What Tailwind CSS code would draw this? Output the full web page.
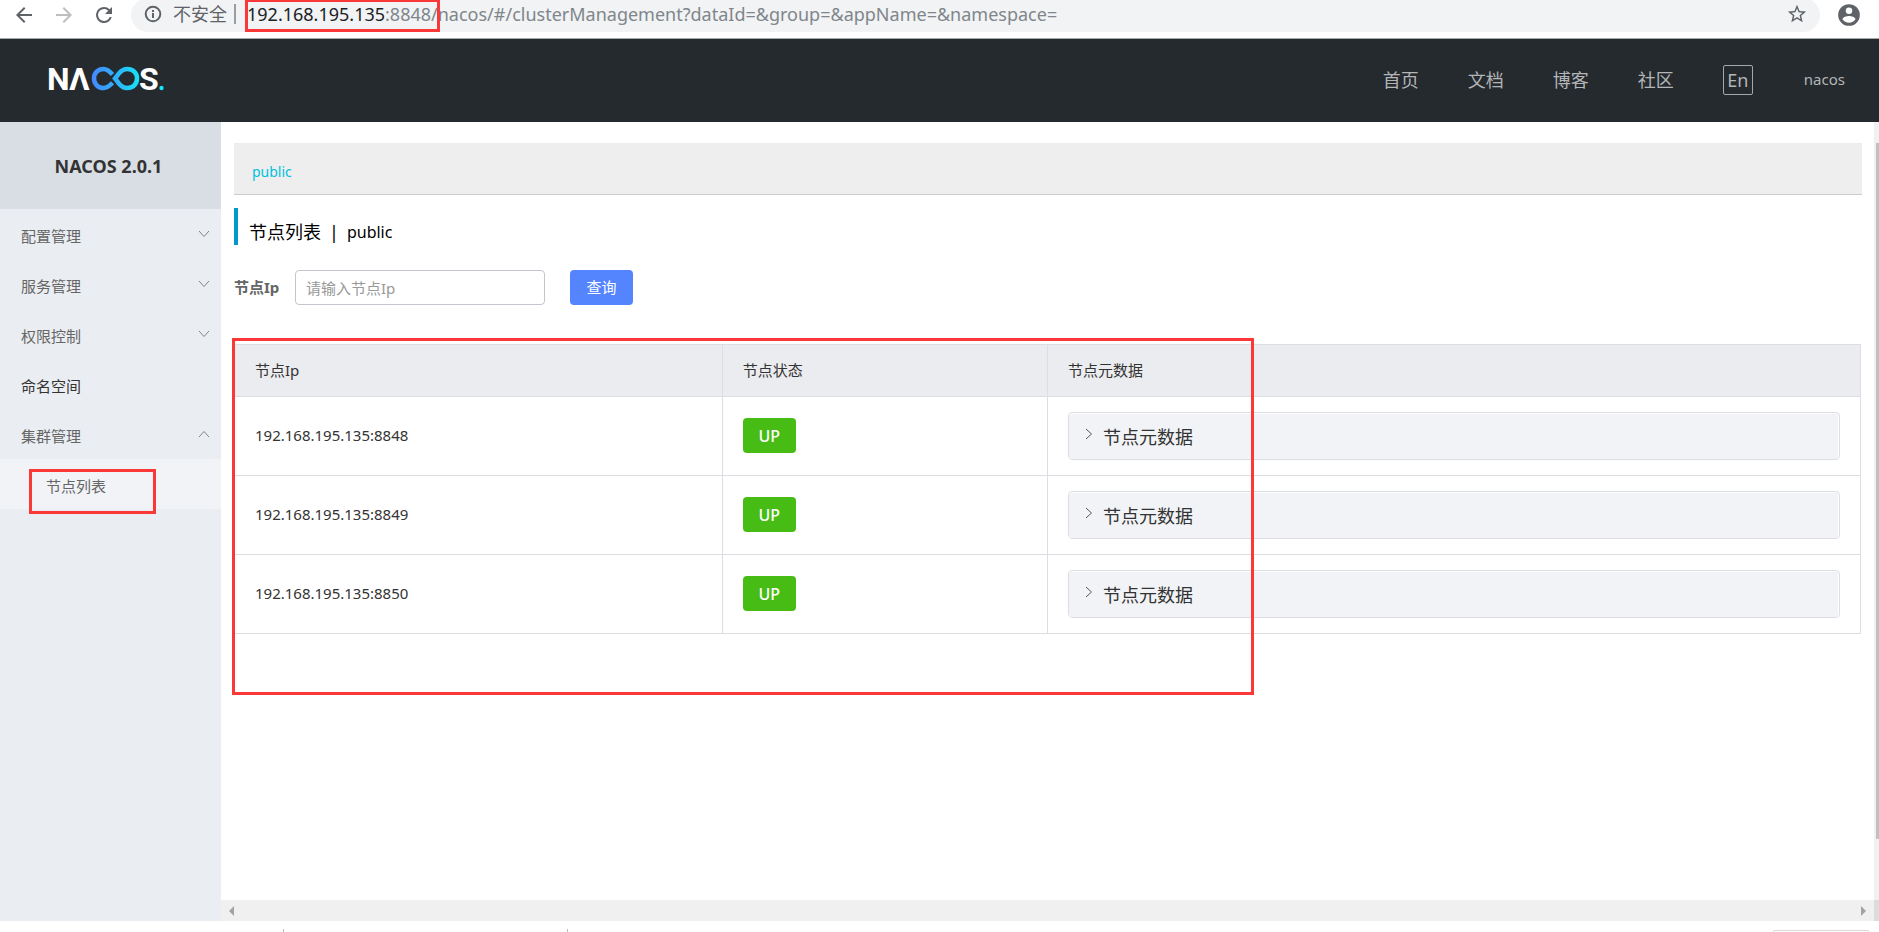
<!DOCTYPE html>
<html lang="zh-CN">
<head>
<meta charset="utf-8">
<title>Nacos</title>
<script src="https://cdn.jsdelivr.net/npm/@tailwindcss/browser@4"></script>
</head>
<body class="flex h-screen min-h-[700px] flex-col overflow-hidden bg-white font-['Noto_Sans','Noto_Sans_CJK_SC',sans-serif] text-[15px] text-[#333]">

<!-- Browser toolbar -->
<div class="flex h-[39px] shrink-0 items-start border-b border-[#a5abab] bg-white pl-3 pr-[17px] text-[#5f6368]">
  <div class="flex h-[30px] items-center gap-4">
    <button aria-label="后退" class="size-6"><svg viewBox="0 0 24 24" class="size-6" fill="#5f6368"><path d="M20 11H7.83l5.59-5.59L12 4l-8 8 8 8 1.41-1.41L7.83 13H20v-2z"/></svg></button>
    <button aria-label="前进" class="size-6"><svg viewBox="0 0 24 24" class="size-6" fill="#bcbec0"><path d="M12 4l-1.41 1.41L16.17 11H4v2h12.17l-5.58 5.59L12 20l8-8z"/></svg></button>
    <button aria-label="重新加载" class="size-6"><svg viewBox="0 0 24 24" class="size-6" fill="#5f6368"><path d="M17.65 6.35A7.96 7.96 0 0 0 12 4a8 8 0 1 0 7.73 10h-2.08A6 6 0 1 1 12 6c1.66 0 3.14.69 4.22 1.78L13 11h7V4l-2.35 2.35z"/></svg></button>
  </div>
  <div class="-mt-0.5 ml-[15px] flex h-[34px] flex-1 items-center rounded-full bg-[#f1f3f4] pb-0.5 pl-3 pr-3">
    <svg viewBox="0 0 20 20" class="size-5 shrink-0" fill="none" stroke="#5f6368" stroke-width="2"><circle cx="10" cy="10" r="7.3"/><path d="M10 9v5M10 6v2"/></svg>
    <span class="ml-2.5 text-lg leading-6">不安全</span>
    <span class="ml-[7px] h-5 w-0.5 bg-[#9a9da1]"></span>
    <div class="relative ml-[11px] text-[18px] leading-6 text-[#80868b]"><span class="text-[#202124]">192.168.195.135</span>:8848/nacos/#/clusterManagement?dataId=&amp;group=&amp;appName=&amp;namespace=
      <span class="absolute -left-[2px] -top-[3px] h-[33px] w-[195px] border-3 border-[#fb3838]"></span>
    </div>
    <button aria-label="收藏" class="ml-auto size-[22px]"><svg viewBox="0 0 24 24" class="size-[22px]" fill="#5f6368"><path d="M22 9.24l-7.19-.62L12 2 9.19 8.63 2 9.24l5.46 4.73L5.82 21 12 17.27 18.18 21l-1.63-7.03L22 9.24zM12 15.4l-3.76 2.27 1-4.28-3.32-2.88 4.38-.38L12 6.1l1.71 4.04 4.38.38-3.32 2.88 1 4.28L12 15.4z"/></svg></button>
  </div>
  <button aria-label="用户" class="ml-4 mt-[2px] size-[26px]"><svg viewBox="0 0 24 24" class="size-[26px]" fill="#5f6368"><path d="M12 2a10 10 0 1 0 0 20 10 10 0 0 0 0-20zm0 3a3 3 0 1 1 0 6 3 3 0 0 1 0-6zm0 14.2a7.2 7.2 0 0 1-6-3.22c.03-1.99 4-3.08 6-3.08s5.970 1.090 6 3.080a7.200 7.200 0 0 1-6 3.220z"/></svg></button>
</div>

<!-- Site header -->
<header class="flex h-[83px] shrink-0 items-center justify-between bg-[#252a2f] pl-12 pr-[34px]">
  <a href="#" aria-label="NACOS" class="mb-[3px] block">
    <svg width="120" height="48" viewBox="0 -8 120 48">
      <defs>
        <linearGradient id="loop" gradientUnits="userSpaceOnUse" x1="44" y1="0" x2="91" y2="0"><stop offset="0" stop-color="#4589ff"/><stop offset=".5" stop-color="#2fb0fa"/><stop offset="1" stop-color="#17e3f6"/></linearGradient>
      </defs>
      <g fill="#fff" font-family="Roboto, sans-serif" font-weight="700" font-size="32">
        <text x="-1" y="27">N</text><text x="21" y="27">Λ</text><text x="91" y="27">S</text>
      </g>
      <g fill="none" stroke="url(#loop)" stroke-width="4.500">
        <path d="M64.500 11.500C61 7.500 58.500 6 55.500 6C50 6 46 10 46 15.500S50 25 55.500 25C58.500 25 61 23.500 64.500 19.800"/>
        <path d="M67 15.500L71.500 9.800C74 7 76.500 6 79 6C85 6 89 10 89 15.500S85 25 79 25C76.500 25 74 24 71.500 21.200Z"/>
      </g>
      <circle cx="113.500" cy="25" r="2.200" fill="#17e3f6"/>
    </svg>
  </a>
  <nav class="flex items-center gap-[49px] pb-px text-lg text-[#b3b5b7]">
    <a href="#">首页</a>
    <a href="#">文档</a>
    <a href="#">博客</a>
    <a href="#">社区</a>
    <button class="flex size-[30px] items-center justify-center rounded-xs border border-[#a5a7a9]">En</button>
    <a href="#" class="pl-0.5 text-[15px]">nacos</a>
  </nav>
</header>

<div class="flex min-h-0 flex-1">
  <!-- Side menu -->
  <aside class="w-[221px] shrink-0 bg-[#eaedf1] text-[#666]">
    <h1 class="flex h-[87px] items-center justify-center bg-[#d9dee4] pr-1 text-lg font-bold text-[#333]">NACOS 2.0.1</h1>
    <ul>
      <li><button class="flex h-[50px] w-full items-center justify-between pl-[21px] pr-3 pt-1">配置管理<svg viewBox="0 0 10 6" class="mb-1 h-1.5 w-2.5 overflow-visible" fill="none" stroke="#808489"><path d="M0 0l5 5.500L10 0"/></svg></button></li>
      <li><button class="flex h-[50px] w-full items-center justify-between pl-[21px] pr-3 pt-1">服务管理<svg viewBox="0 0 10 6" class="mb-1 h-1.5 w-2.5 overflow-visible" fill="none" stroke="#808489"><path d="M0 0l5 5.500L10 0"/></svg></button></li>
      <li><button class="flex h-[50px] w-full items-center justify-between pl-[21px] pr-3 pt-1">权限控制<svg viewBox="0 0 10 6" class="mb-1 h-1.5 w-2.5 overflow-visible" fill="none" stroke="#808489"><path d="M0 0l5 5.500L10 0"/></svg></button></li>
      <li><a href="#" class="flex h-[50px] items-center pl-[21px] pt-1 text-[#333]">命名空间</a></li>
      <li>
        <button class="flex h-[50px] w-full items-center justify-between pl-[21px] pr-3 pt-1">集群管理<svg viewBox="0 0 10 6" class="mb-1 h-1.5 w-2.5 overflow-visible" fill="none" stroke="#808489"><path d="M0 6l5-5.500L10 6"/></svg></button>
        <a href="#" class="relative flex h-[50px] items-center bg-[#f1f3f7] pl-[46px] pt-1">节点列表
          <span class="absolute left-[29px] top-2.5 h-[45px] w-[127px] border-3 border-[#fb3838]"></span>
        </a>
      </li>
    </ul>
  </aside>

  <div class="flex min-w-0 flex-1 flex-col">
    <div class="flex min-h-0 flex-1">
      <main class="min-w-0 flex-1 pl-[13px] pr-3 pt-[21px]">
        <div class="flex h-[52px] items-center border-b border-[#ccc] bg-[#eee] pl-[18px] pt-1.5"><a href="#" class="text-sm text-[#00c1de]">public</a></div>
        <h2 class="mt-[13px] flex h-[37px] items-center gap-2 border-l-4 border-[#09c] pl-[11px] pt-2.5 text-lg text-black"><span>节点列表</span><span>|</span><span class="text-base">public</span></h2>

        <form class="mt-[25px] flex h-[35px] items-center" onsubmit="return false">
          <label for="ip" class="w-[61px] font-bold text-[#666]">节点Ip</label>
          <input id="ip" type="text" placeholder="请输入节点Ip" class="h-full w-[250px] rounded border border-[#c4c6cf] px-2.5 placeholder:text-[#999]">
          <button class="ml-[25px] h-full w-[63px] rounded bg-[#5584ff] text-white">查询</button>
        </form>

        <div class="relative mt-[39px] pr-px">
          <table class="w-full table-fixed border-collapse border border-[#dcdee3]">
            <thead>
              <tr class="h-[52px] bg-[#ebecf0] text-left">
                <th class="w-[30%] border border-[#dcdee3] px-5 font-normal">节点Ip</th>
                <th class="w-[20%] border border-[#dcdee3] px-5 font-normal">节点状态</th>
                <th class="w-[50%] border border-[#dcdee3] px-5 font-normal">节点元数据</th>
              </tr>
            </thead>
            <tbody>
              <tr class="h-[79px]">
                <td class="border border-[#dcdee3] px-5 pb-0.5">192.168.195.135:8848</td>
                <td class="border border-[#dcdee3] px-5 pb-0.5"><span class="flex h-[35px] w-[53px] items-center justify-center rounded bg-[#46bc15] pt-0.5 text-base font-medium text-white">UP</span></td>
                <td class="border border-[#dcdee3] px-5"><button class="flex h-12 w-full rounded border border-[#dcdee3] bg-white pr-px pt-px text-lg"><span class="flex flex-1 items-center bg-[#f2f3f7] pl-[17px]"><svg viewBox="0 0 6 10" class="mb-1.5 mr-[11px] h-2.5 w-1.5 overflow-visible" fill="none" stroke="#555"><path d="M0 0l5.500 5L0 10"/></svg>节点元数据</span></button></td>
              </tr>
              <tr class="h-[79px]">
                <td class="border border-[#dcdee3] px-5 pb-0.5">192.168.195.135:8849</td>
                <td class="border border-[#dcdee3] px-5 pb-0.5"><span class="flex h-[35px] w-[53px] items-center justify-center rounded bg-[#46bc15] pt-0.5 text-base font-medium text-white">UP</span></td>
                <td class="border border-[#dcdee3] px-5"><button class="flex h-12 w-full rounded border border-[#dcdee3] bg-white pr-px pt-px text-lg"><span class="flex flex-1 items-center bg-[#f2f3f7] pl-[17px]"><svg viewBox="0 0 6 10" class="mb-1.5 mr-[11px] h-2.5 w-1.5 overflow-visible" fill="none" stroke="#555"><path d="M0 0l5.500 5L0 10"/></svg>节点元数据</span></button></td>
              </tr>
              <tr class="h-[79px]">
                <td class="border border-[#dcdee3] px-5 pb-0.5">192.168.195.135:8850</td>
                <td class="border border-[#dcdee3] px-5 pb-0.5"><span class="flex h-[35px] w-[53px] items-center justify-center rounded bg-[#46bc15] pt-0.5 text-base font-medium text-white">UP</span></td>
                <td class="border border-[#dcdee3] px-5"><button class="flex h-12 w-full rounded border border-[#dcdee3] bg-white pr-px pt-px text-lg"><span class="flex flex-1 items-center bg-[#f2f3f7] pl-[17px]"><svg viewBox="0 0 6 10" class="mb-1.5 mr-[11px] h-2.5 w-1.5 overflow-visible" fill="none" stroke="#555"><path d="M0 0l5.500 5L0 10"/></svg>节点元数据</span></button></td>
              </tr>
            </tbody>
          </table>
          <span class="pointer-events-none absolute -left-0.5 -top-1.5 h-[357px] w-[1022px] border-3 border-[#fb3838]"></span>
        </div>
      </main>
      <!-- Vertical scrollbar -->
      <div class="w-[5px] shrink-0 bg-[#f1f1f1] pl-0.5 pt-[21px]"><div class="h-[92%] bg-[#c1c1c1]"></div></div>
    </div>
    <!-- Horizontal scrollbar -->
    <div class="flex h-[21px] shrink-0 items-center bg-[#f0f0f0] pl-2">
      <svg viewBox="0 0 5 10" class="h-2.5 w-[5px]" fill="#a3a3a3"><path d="M5 0v10L0 5z"/></svg>
      <svg viewBox="0 0 5 10" class="ml-auto mr-2 h-2.5 w-[5px]" fill="#a3a3a3"><path d="M0 0v10l5-5z"/></svg>
      <span class="h-full w-[5px] bg-[#dcdcdc]"></span>
    </div>
  </div>
</div>

<!-- Top edge of the download shelf -->
<div class="flex h-[11px] shrink-0 items-end pl-[283px] pr-2.5">
  <span class="h-[3px] w-px bg-[#bbb]"></span>
  <span class="ml-[283px] h-[3px] w-px bg-[#bbb]"></span>
  <span class="ml-auto h-0.5 w-24 rounded-t border-x border-t border-[#dadada]"></span>
</div>
</body>
</html>
